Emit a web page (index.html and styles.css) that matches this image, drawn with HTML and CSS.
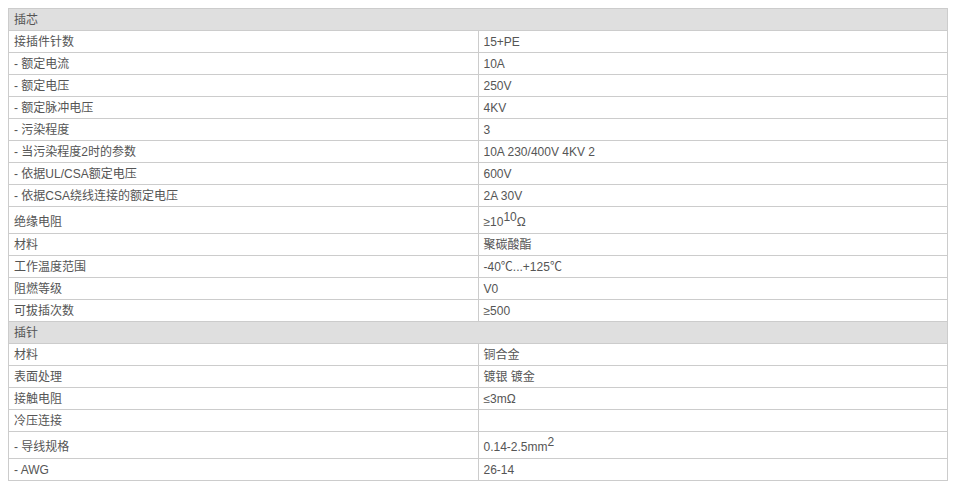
FILE: index.html
```html
<!DOCTYPE html>
<html lang="zh">
<head>
<meta charset="utf-8">
<link rel="stylesheet" href="styles.css">
</head>
<body>
<table class="spec">
  <tr class="head"><td colspan="2">插芯</td></tr>
  <tr><td class="k">接插件针数</td><td>15+PE</td></tr>
  <tr><td class="k">- 额定电流</td><td>10A</td></tr>
  <tr><td class="k">- 额定电压</td><td>250V</td></tr>
  <tr><td class="k">- 额定脉冲电压</td><td>4KV</td></tr>
  <tr><td class="k">- 污染程度</td><td>3</td></tr>
  <tr><td class="k">- 当污染程度2时的参数</td><td>10A 230/400V 4KV 2</td></tr>
  <tr><td class="k">- 依据UL/CSA额定电压</td><td>600V</td></tr>
  <tr><td class="k">- 依据CSA绕线连接的额定电压</td><td>2A 30V</td></tr>
  <tr class="tall"><td class="k">绝缘电阻</td><td>≥10<sup>10</sup>Ω</td></tr>
  <tr><td class="k">材料</td><td>聚碳酸酯</td></tr>
  <tr><td class="k">工作温度范围</td><td>-40℃...+125℃</td></tr>
  <tr><td class="k">阻燃等级</td><td>V0</td></tr>
  <tr><td class="k">可拔插次数</td><td>≥500</td></tr>
  <tr class="head"><td colspan="2">插针</td></tr>
  <tr><td class="k">材料</td><td>铜合金</td></tr>
  <tr><td class="k">表面处理</td><td>镀银 镀金</td></tr>
  <tr><td class="k">接触电阻</td><td>≤3mΩ</td></tr>
  <tr><td class="k">冷压连接</td><td></td></tr>
  <tr class="tall"><td class="k">- 导线规格</td><td>0.14-2.5mm<sup>2</sup></td></tr>
  <tr><td class="k">- AWG</td><td>26-14</td></tr>
</table>
</body>
</html>
```

FILE: styles.css
```css
body {
  margin: 8px;
  background: #ffffff;
  font-family: "Liberation Sans", Arial, "Noto Sans CJK SC", sans-serif;
  font-size: 12px;
  color: #555555;
}

.spec {
  border-collapse: collapse;
  width: 940px;
  table-layout: fixed;
}

.spec td {
  border: 1px solid #cccccc;
  height: 21px;
  padding: 0 5px;
  line-height: 14px;
  vertical-align: middle;
  white-space: nowrap;
}

.spec td.k {
  width: 458px;
}

.spec .head td {
  background: #dfdfdf;
}

.spec .tall td {
  height: 23px;
  padding-top: 3px;
}

.spec sup {
  font-size: 12px;
  line-height: 0;
  vertical-align: 5px;
}
```
